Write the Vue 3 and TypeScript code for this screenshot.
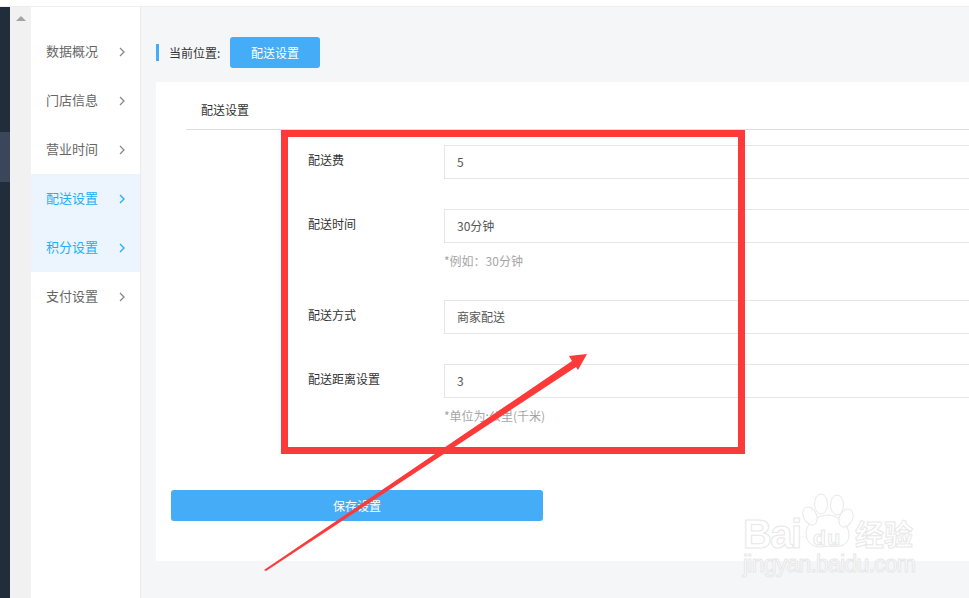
<script setup lang="ts">
interface NavItem { label: string; active?: boolean }
interface Field { label: string; value: string; hint?: string }

const navItems: NavItem[] = [
  { label: '数据概况' },
  { label: '门店信息' },
  { label: '营业时间' },
  { label: '配送设置', active: true },
  { label: '积分设置', active: true },
  { label: '支付设置' },
]

const fields: Field[] = [
  { label: '配送费', value: '5' },
  { label: '配送时间', value: '30分钟', hint: '*例如：30分钟' },
  { label: '配送方式', value: '商家配送' },
  { label: '配送距离设置', value: '3', hint: '*单位为:公里(千米)' },
]
</script>

<template>
  <div class="page">
    <div class="topbar"></div>
    <div class="body">
      <aside class="rail"><div class="rail-active"></div></aside>
      <div class="gutter"><span class="gutter-arrow"></span></div>
      <nav class="subnav">
        <div v-for="item in navItems" :key="item.label" class="nav-item" :class="{ active: item.active }">
          <span class="nav-label">{{ item.label }}</span>
          <svg class="chev" width="6" height="10" viewBox="0 0 6 10">
            <path d="M1 1 L5 5 L1 9" fill="none" stroke="currentColor" stroke-width="1.3" />
          </svg>
        </div>
      </nav>
      <main class="main">
        <div class="crumb">
          <span class="crumb-mark"></span>
          <span class="crumb-text">当前位置:</span>
          <span class="crumb-btn">配送设置</span>
        </div>
        <section class="card">
          <div class="tab"><span>配送设置</span></div>
          <div class="form">
            <div v-for="f in fields" :key="f.label" class="row">
              <label class="row-label">{{ f.label }}</label>
              <div class="row-control">
                <div class="input">{{ f.value }}</div>
                <div v-if="f.hint" class="hint">{{ f.hint }}</div>
              </div>
            </div>
          </div>
          <button class="save" type="button">保存设置</button>
        </section>
      </main>
    </div>

    <div class="redbox"></div>
    <svg class="overlay" width="969" height="598" viewBox="0 0 969 598">
      <polygon points="264,570 572,361 569,356 587,354 578,370 576,367 266,571" fill="#fd3a3a" />
      <g class="wm">
        <text x="743" y="548" font-size="40" font-weight="700" font-family="'Liberation Sans', sans-serif" textLength="59">Bai</text>
        <path d="M806 533 C806 522 819 515 828 515 C837 515 849 523 849 535 C849 545 840 548 828 546 C816 549 806 545 806 533 Z" />
        <ellipse cx="810" cy="516" rx="6.5" ry="9.5" transform="rotate(-25 810 516)" />
        <ellipse cx="821" cy="504" rx="6.5" ry="10" />
        <ellipse cx="837" cy="505" rx="6.5" ry="10" />
        <ellipse cx="846" cy="518" rx="6.5" ry="9.5" transform="rotate(25 846 518)" />
        <text x="813" y="545" font-size="21" font-weight="700" font-family="'Liberation Sans', sans-serif" textLength="27">du</text>
        <text x="855" y="546" font-size="29" font-weight="700" font-family="'Noto Sans CJK SC', sans-serif">经验</text>
        <text x="743" y="572" font-size="23" font-family="'Liberation Sans', sans-serif" textLength="173">jingyan.baidu.com</text>
      </g>
    </svg>
  </div>
</template>

<style>
html, body { margin: 0; background: #fff; }
</style>

<style scoped>
.page {
  position: relative;
  width: 969px;
  height: 598px;
  overflow: hidden;
  display: flex;
  flex-direction: column;
  background: #fff;
  font-family: "Noto Sans CJK SC", "Liberation Sans", sans-serif;
  font-size: 12px;
  color: #333;
}
.topbar { height: 6px; flex: none; border-bottom: 1px solid #eceef0; }
.body { flex: 1; display: flex; min-height: 0; }
.rail { width: 10px; flex: none; background: #212d3a; padding-top: 125px; box-sizing: border-box; }
.rail-active { height: 50px; background: #3a4659; }
.gutter { width: 21px; flex: none; background: #f1f1f1; display: flex; justify-content: center; padding-top: 9px; box-sizing: border-box; }
.gutter-arrow { width: 0; height: 0; border-left: 5px solid transparent; border-right: 5px solid transparent; border-bottom: 5px solid #a3a3a3; }
.subnav { width: 110px; flex: none; padding-top: 20px; box-sizing: border-box; background: #fff; border-right: 1px solid #e9ebee; }
.nav-item { height: 49px; display: flex; align-items: center; justify-content: space-between; padding: 0 15px; font-size: 13px; color: #666; }
.nav-label { line-height: 48px; height: 49px; }
.nav-item.active { background: #ecf5fe; color: #1cb0f6; }
.chev { color: #888; }
.nav-item.active .chev { color: #1cb0f6; }
.main { flex: 1; min-width: 0; background: #f5f6f8; padding: 30px 0 0 15px; box-sizing: border-box; }
.crumb { height: 31px; display: flex; align-items: center; }
.crumb-mark { width: 3px; height: 17px; background: #45acf8; margin-right: 10px; }
.crumb-text { width: 61px; color: #333; }
.crumb-btn { width: 90px; height: 31px; line-height: 31px; text-align: center; color: #fff; background: #45acf8; border-radius: 3px; }
.card { margin-top: 14px; height: 479px; box-sizing: border-box; background: #fff; padding-left: 15px; overflow: hidden; }
.tab { margin-left: 15px; height: 48px; border-bottom: 1px solid #ddd; box-sizing: border-box; padding: 19px 0 0 15px; line-height: 18px; }
.form { padding: 15px 0 0 137px; display: flex; flex-direction: column; gap: 30px; }
.row { display: flex; align-items: flex-start; }
.row-label { width: 136px; flex: none; line-height: 30px; color: #333; }
.row-control { flex: none; width: 600px; }
.input { height: 34px; box-sizing: border-box; border: 1px solid #e6e6e6; padding-left: 12px; line-height: 31px; color: #555; }
.hint { margin-top: 10px; height: 17px; line-height: 16px; color: #a5a5a5; }
.save { display: block; width: 372px; height: 31px; margin-top: 65px; border: 0; padding: 0 0 1px; border-radius: 3px; background: #45acf8; color: #fff; font: inherit; }
.redbox { position: absolute; left: 281px; top: 130px; width: 464px; height: 324px; box-sizing: border-box; border: 7px solid #fd3a3a; }
.overlay { position: absolute; left: 0; top: 0; pointer-events: none; }
.wm { fill: rgba(255, 255, 255, 0.75); stroke: #e8e8e8; stroke-width: 1; }
</style>
